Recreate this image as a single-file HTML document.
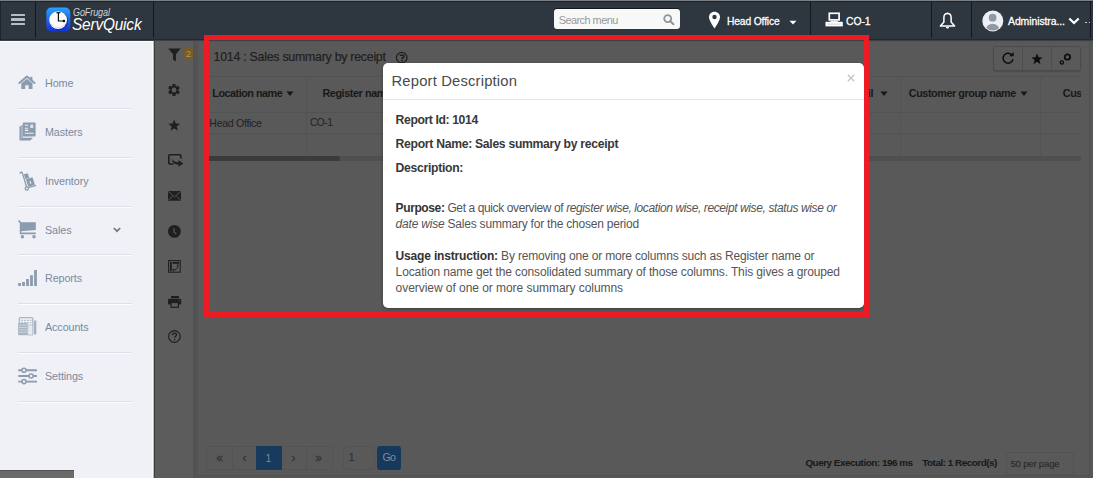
<!DOCTYPE html>
<html><head><meta charset="utf-8">
<style>
*{box-sizing:border-box}
html,body{margin:0;padding:0}
body{width:1093px;height:478px;overflow:hidden;position:relative;background:#575858;font-family:"Liberation Sans",sans-serif}
.a{position:absolute}
.t{position:absolute;white-space:nowrap}
svg{position:absolute;overflow:visible}
.vsep{position:absolute;top:1px;width:1px;height:37px;background:#14191f}
.dv{position:absolute;left:18px;width:114px;height:2px;border-top:1px solid #dde1e7;border-bottom:1px solid #fbfcfd}
</style></head><body>
<div class="a" style="left:0;top:0;width:1093px;height:40px;background:#2e3640"></div>
<div class="a" style="left:0;top:0;width:1093px;height:1px;background:#7c8084"></div>
<div class="a" style="left:0;top:1px;width:1093px;height:1px;background:#1c232c"></div>
<div class="a" style="left:0;top:39px;width:1093px;height:1px;background:#222931"></div>
<div class="a" style="left:0;top:1px;width:1px;height:39px;background:#1c232c"></div>
<div class="a" style="left:10.6px;top:13.9px;width:14.7px;height:2.5px;background:#b6bdc6;border-radius:0.5px"></div>
<div class="a" style="left:10.6px;top:18.3px;width:14.7px;height:2.5px;background:#b6bdc6;border-radius:0.5px"></div>
<div class="a" style="left:10.6px;top:22.7px;width:14.7px;height:2.5px;background:#b6bdc6;border-radius:0.5px"></div>
<div class="vsep" style="left:35px"></div>
<svg style="left:46px;top:7px" width="25" height="25" viewBox="0 0 25 25">
<defs><linearGradient id="lg" x1="0" y1="0" x2="0" y2="1"><stop offset="0" stop-color="#27a3ff"/><stop offset="1" stop-color="#1431d6"/></linearGradient></defs>
<rect x="0.3" y="0.5" width="24" height="24" rx="5" fill="url(#lg)"/>
<circle cx="12.9" cy="13.9" r="9.3" fill="#0b2488" opacity="0.6"/>
<circle cx="12.1" cy="13.1" r="8.9" fill="#fbfbfb"/>
<path d="M5.5 17.5a8.2 8.2 0 0 0 13.8-1.2" stroke="#dcdcdc" stroke-width="1" fill="none"/>
<path d="M12.4 6v8h6.2" stroke="#111" stroke-width="1.2" fill="none"/>
<path d="M10.4 5.7h4" stroke="#222" stroke-width="1.3"/>
<circle cx="17.9" cy="14" r="1.3" fill="#111"/>
</svg>
<div class="t" style="left:73.30px;top:7.58px;font-size:10.3px;line-height:10.3px;color:#d0d3d7;letter-spacing:-0.1px;font-weight:normal;font-style:italic;transform:scaleX(0.875);transform-origin:0 0;">GoFrugal</div>
<div class="t" style="left:72.30px;top:16.47px;font-size:17.4px;line-height:17.4px;color:#ffffff;letter-spacing:-0.2px;font-weight:normal;font-style:italic;transform:scaleX(0.885);transform-origin:0 0;">ServQuick</div>
<div class="vsep" style="left:153px"></div>
<div class="a" style="left:554px;top:9px;width:126px;height:20px;background:#f8f8f8;border-radius:3px;box-shadow:0 -1px 0 #15191e"></div>
<div class="t" style="left:558.70px;top:15.37px;font-size:10.9px;line-height:10.9px;color:#999;letter-spacing:-0.52px;font-weight:normal;font-style:normal;">Search menu</div>
<svg style="left:663px;top:14px" width="12" height="11" viewBox="0 0 12 11">
<circle cx="4.7" cy="4.6" r="3.5" stroke="#8f959c" stroke-width="1.8" fill="none"/>
<path d="M7.3 7.2l3.2 3" stroke="#8f959c" stroke-width="2" stroke-linecap="round"/></svg>
<svg style="left:708px;top:11px" width="13" height="18" viewBox="0 0 13 18">
<path d="M6.5 0.8C3.3 0.8 1 3.2 1 6.2c0 3.6 5.5 11.2 5.5 11.2S12 9.8 12 6.2C12 3.2 9.7 0.8 6.5 0.8z" fill="#fff"/>
<circle cx="6.5" cy="6" r="2.2" fill="#2e3640"/></svg>
<div class="t" style="left:726.70px;top:15.53px;font-size:11.3px;line-height:11.3px;color:#fff;letter-spacing:-0.15px;font-weight:normal;font-style:normal;-webkit-text-stroke:0.3px #fff;transform:scaleX(0.91);transform-origin:0 0;">Head Office</div>
<svg style="left:789px;top:20px" width="8" height="5" viewBox="0 0 8 5"><path d="M0.5 0.8h7L4 4.6z" fill="#fff"/></svg>
<div class="vsep" style="left:810px"></div>
<svg style="left:825px;top:12px" width="18" height="15" viewBox="0 0 18 15">
<rect x="4.3" y="1.3" width="9.8" height="6.6" stroke="#fff" stroke-width="1.7" fill="none"/>
<rect x="5.5" y="8.6" width="7.4" height="1.4" fill="#e8e8e8"/>
<rect x="0.5" y="9.8" width="17.3" height="4.6" fill="#fff"/>
<path d="M2.3 12.1h13.6" stroke="#c9c9cc" stroke-width="0.8"/>
</svg>
<div class="t" style="left:846.00px;top:15.73px;font-size:11.3px;line-height:11.3px;color:#fff;letter-spacing:-0.1px;font-weight:normal;font-style:normal;-webkit-text-stroke:0.3px #fff;transform:scaleX(0.92);transform-origin:0 0;">CO-1</div>
<div class="vsep" style="left:931px"></div>
<svg style="left:939px;top:12px" width="17" height="18" viewBox="0 0 17 18">
<path d="M8.5 1.6C6.2 1.6 4.9 3.4 4.9 5.6v4.3L1.4 13.9h14.2l-3.5-4v-4.3c0-2.2-1.3-4-3.6-4z" stroke="#fff" stroke-width="1.5" fill="none" stroke-linejoin="round"/>
<path d="M6.9 15a1.6 1.6 0 0 0 3.2 0z" fill="#fff"/>
<circle cx="8.5" cy="1.2" r="0.8" fill="#fff"/>
</svg>
<div class="vsep" style="left:971px"></div>
<div class="vsep" style="left:1090px"></div>
<svg style="left:981.5px;top:9.5px" width="22" height="22" viewBox="0 0 22 22">
<defs><clipPath id="cc"><circle cx="10.8" cy="10.9" r="9.6"/></clipPath></defs>
<circle cx="10.8" cy="10.9" r="10.5" fill="#eeeff3"/>
<g clip-path="url(#cc)" fill="#8e9aa6"><circle cx="10.6" cy="7.7" r="3.9"/><ellipse cx="10.6" cy="19.3" rx="6.6" ry="5.5"/></g></svg>
<div class="t" style="left:1007.60px;top:15.83px;font-size:11.3px;line-height:11.3px;color:#fff;letter-spacing:-0.1px;font-weight:normal;font-style:normal;-webkit-text-stroke:0.3px #fff;transform:scaleX(0.925);transform-origin:0 0;">Administra...</div>
<svg style="left:1068px;top:17px" width="12" height="8" viewBox="0 0 12 8"><path d="M1.3 1.5l4.7 4.5 4.7-4.5" stroke="#fff" stroke-width="2.3" fill="none"/></svg>
<div class="a" style="left:1085px;top:21.5px;width:1.5px;height:1.5px;background:#ccc"></div>
<div class="a" style="left:1088.5px;top:21.5px;width:1.5px;height:1.5px;background:#ccc"></div>
<div class="a" style="left:0;top:40px;width:1093px;height:1px;background:#3c4148"></div>
<div class="a" style="left:0;top:41px;width:154px;height:437px;background:#eff1f6"></div>
<div class="a" style="left:0;top:41px;width:153px;height:1px;background:#fdfdfe"></div>
<div class="a" style="left:152px;top:41px;width:1px;height:437px;background:#fbfcfe"></div>
<div class="a" style="left:153px;top:41px;width:1px;height:437px;background:#b4bac1"></div>
<div class="t" style="left:45.30px;top:78.11px;font-size:11.8px;line-height:11.8px;color:#7b899e;letter-spacing:-0.1px;font-weight:normal;font-style:normal;transform:scaleX(0.912);transform-origin:0 0;">Home</div>
<svg style="left:18px;top:75px" width="18" height="15" viewBox="0 0 18 15"><path d="M1.3 8L8.9 1.6 16.5 8" stroke="#8c9bae" stroke-width="2" fill="none" stroke-linecap="round" stroke-linejoin="round"/><path d="M3.3 8.3L8.9 3.7l5.6 4.6V14h-3.9v-3.8H7.2V14H3.3z" fill="#8c9bae"/><rect x="12.2" y="1.8" width="2.2" height="4" fill="#8c9bae"/></svg>
<div class="dv" style="top:108.00px"></div>
<div class="t" style="left:45.30px;top:126.91px;font-size:11.8px;line-height:11.8px;color:#7b899e;letter-spacing:-0.1px;font-weight:normal;font-style:normal;transform:scaleX(0.912);transform-origin:0 0;">Masters</div>
<svg style="left:17.5px;top:122px" width="19" height="19" viewBox="0 0 19 19"><path d="M2.3 4.2v13.5h10.5" stroke="#8c9bae" stroke-width="1.6" fill="none"/><path d="M4 3v13.5h10.3" stroke="#8c9bae" stroke-width="1.3" fill="none"/><rect x="4.8" y="0.6" width="12.8" height="14" rx="1" fill="#8c9bae"/><path d="M6.8 3.3h3.4M6.8 6.3h3.4M6.8 8.4h3.4M6.8 11.2h8.7" stroke="#f0f2f6" stroke-width="1.1"/><rect x="12.2" y="2.6" width="3" height="3.4" fill="#dfe3ea"/></svg>
<div class="dv" style="top:156.80px"></div>
<div class="t" style="left:45.30px;top:175.71px;font-size:11.8px;line-height:11.8px;color:#7b899e;letter-spacing:-0.1px;font-weight:normal;font-style:normal;transform:scaleX(0.912);transform-origin:0 0;">Inventory</div>
<svg style="left:18.5px;top:171px" width="18" height="20" viewBox="0 0 18 20"><path d="M0.8 2.6c0.5-1.8 2.4-1.8 2.8 0l4 13.4" stroke="#8c9bae" stroke-width="1.3" fill="none"/><circle cx="7.8" cy="17.5" r="1.6" stroke="#8c9bae" stroke-width="1.3" fill="none"/><path d="M9.3 16.6l7.8-2.2" stroke="#8c9bae" stroke-width="1.3"/><path d="M4.9 3.3l3.8-1.1 1.5 4.6-3.8 1.1z" fill="#8c9bae"/><path d="M6.9 8.3l6.6-2 2.4 7.4-6.6 2z" fill="#8c9bae"/><path d="M11 10.2l0.9 2.6" stroke="#eef0f5" stroke-width="1.1"/></svg>
<div class="dv" style="top:205.60px"></div>
<div class="t" style="left:45.30px;top:224.51px;font-size:11.8px;line-height:11.8px;color:#7b899e;letter-spacing:-0.1px;font-weight:normal;font-style:normal;transform:scaleX(0.912);transform-origin:0 0;">Sales</div>
<svg style="left:18px;top:220px" width="19" height="19" viewBox="0 0 19 19"><path d="M0.6 0.6l2 2.2v10.6h15.2" stroke="#8c9bae" stroke-width="1.6" fill="none"/><path d="M2.6 2.3H17.8v7.8L2.6 11.3z" fill="#8c9bae"/><circle cx="4.4" cy="16.8" r="1.75" fill="#8c9bae"/><circle cx="16" cy="16.8" r="1.75" fill="#8c9bae"/></svg>
<div class="dv" style="top:254.40px"></div>
<div class="t" style="left:45.30px;top:273.31px;font-size:11.8px;line-height:11.8px;color:#7b899e;letter-spacing:-0.1px;font-weight:normal;font-style:normal;transform:scaleX(0.912);transform-origin:0 0;">Reports</div>
<svg style="left:18px;top:269px" width="19" height="18" viewBox="0 0 19 18"><rect x="0.1" y="14" width="2.8" height="3" fill="#8c9bae"/><rect x="4.1" y="13" width="2.8" height="4" fill="#8c9bae"/><rect x="8.1" y="10" width="2.8" height="7" fill="#8c9bae"/><rect x="12.1" y="6.2" width="2.8" height="10.8" fill="#8c9bae"/><rect x="16.1" y="1" width="2.8" height="16" fill="#8c9bae"/></svg>
<div class="dv" style="top:303.20px"></div>
<div class="t" style="left:45.30px;top:322.11px;font-size:11.8px;line-height:11.8px;color:#7b899e;letter-spacing:-0.1px;font-weight:normal;font-style:normal;transform:scaleX(0.912);transform-origin:0 0;">Accounts</div>
<svg style="left:18px;top:317px" width="19" height="19" viewBox="0 0 19 19"><rect x="1.3" y="0.6" width="13.5" height="16" rx="1" fill="none" stroke="#a8b4c3" stroke-width="1.2"/><path d="M3 3.4h10.5M3 5.7h10.5" stroke="#b9c2cf" stroke-width="1.3" stroke-dasharray="2 1"/><rect x="0.2" y="6" width="9.5" height="12.2" fill="#a9b4c2"/><path d="M1 8h7.8M1 10.4h7.8M1 12.8h7.8M1 15.2h7.8" stroke="#d2d8e1" stroke-width="0.9"/><rect x="9.8" y="8" width="5" height="10" fill="#e6e9ef" stroke="#b3bdca" stroke-width="0.8"/><path d="M17.2 3.5v14" stroke="#a3afbe" stroke-width="2.2"/></svg>
<div class="dv" style="top:352.00px"></div>
<div class="t" style="left:45.30px;top:370.91px;font-size:11.8px;line-height:11.8px;color:#7b899e;letter-spacing:-0.1px;font-weight:normal;font-style:normal;transform:scaleX(0.912);transform-origin:0 0;">Settings</div>
<svg style="left:18px;top:366px" width="19" height="19" viewBox="0 0 19 19"><path d="M0.3 4.2h18.6M0.3 10h18.6M0.3 15.6h18.6" stroke="#8c9bae" stroke-width="1.9"/><circle cx="6" cy="4.2" r="2.05" fill="#eff1f6" stroke="#8c9bae" stroke-width="1.5"/><circle cx="13.1" cy="10" r="2.05" fill="#eff1f6" stroke="#8c9bae" stroke-width="1.5"/><circle cx="6" cy="15.6" r="2.05" fill="#eff1f6" stroke="#8c9bae" stroke-width="1.5"/></svg>
<div class="dv" style="top:400.80px"></div>
<svg style="left:113px;top:227px" width="8" height="6" viewBox="0 0 8 6"><path d="M0.8 1l3.2 3.2L7.2 1" stroke="#777" stroke-width="1.7" fill="none"/></svg>
<div class="a" style="left:0;top:470px;width:74px;height:8px;background:#6a6a6a;border-top:1px solid #545454"></div>
<div class="a" style="left:154px;top:41px;width:1px;height:437px;background:#3e3f3f"></div>
<div class="a" style="left:155px;top:41px;width:38px;height:437px;background:#5c5c5c"></div>
<div class="a" style="left:193px;top:41px;width:900px;height:437px;background:#555656"></div>
<div class="a" style="left:198px;top:41px;width:891.5px;height:434.5px;background:#595959;border-top:1px solid #545555;border-right:1px solid #505151;border-bottom:1px solid #505151;border-radius:0 0 3px 0"></div>
<svg style="left:168px;top:48px" width="13" height="14" viewBox="0 0 13 14"><path d="M0.2 0.6h12.4L7.9 6.2v7.2L5 11.6V6.2z" fill="#1d1f21"/></svg>
<div class="a" style="left:184px;top:47.7px;width:9.3px;height:11.3px;background:#7b5b22;border-radius:2px"></div>
<div class="t" style="left:186.00px;top:49.26px;font-size:9.5px;line-height:9.5px;color:#a99470;letter-spacing:0px;font-weight:normal;font-style:normal;">2</div>
<svg style="left:168.3px;top:84px" width="12" height="12" viewBox="0 0 12 12"><path d="M4.25 2.07 L4.63 0.06 L7.37 0.06 L7.75 2.07 L8.53 2.52 L10.46 1.84 L11.83 4.22 L10.28 5.55 L10.28 6.45 L11.83 7.78 L10.46 10.16 L8.53 9.48 L7.75 9.93 L7.37 11.94 L4.63 11.94 L4.25 9.93 L3.47 9.48 L1.54 10.16 L0.17 7.78 L1.72 6.45 L1.72 5.55 L0.17 4.22 L1.54 1.84 L3.47 2.52Z M6 3.6a2.4 2.4 0 1 0 0.01 0z" fill="#1d1f21" fill-rule="evenodd"/></svg>
<svg style="left:168px;top:119px" width="13" height="12" viewBox="0 0 13 12"><path d="M6.20 0.30 L7.73 4.50 L12.19 4.65 L8.67 7.40 L9.90 11.70 L6.20 9.20 L2.50 11.70 L3.73 7.40 L0.21 4.65 L4.67 4.50Z" fill="#1d1f21"/></svg>
<svg style="left:168px;top:154px" width="16" height="13" viewBox="0 0 16 13"><path d="M5.5 10H2a1.2 1.2 0 0 1-1.2-1.2V2A1.2 1.2 0 0 1 2 0.8h9.6A1.2 1.2 0 0 1 12.8 2v2.5" stroke="#1d1f21" stroke-width="1.6" fill="none"/><path d="M3.2 4.2c1.5 2.8 4 4 7.2 4V6.1l5 3.5-5 3.2v-2.2c-3.5 0-6-1.8-7.2-6.4z" fill="#1d1f21"/></svg>
<svg style="left:168px;top:191px" width="13" height="10" viewBox="0 0 13 10"><rect x="0" y="0" width="13" height="9.8" rx="0.6" fill="#1d1f21"/><path d="M0.3 0.5L6.5 5.8 12.7 0.5M0.3 9.4L4.6 5.1M12.7 9.4L8.4 5.1" stroke="#5c5c5c" stroke-width="0.9" fill="none"/></svg>
<svg style="left:168px;top:224.5px" width="13" height="13" viewBox="0 0 13 13"><circle cx="6.4" cy="6.4" r="6.4" fill="#1d1f21"/><path d="M6 3.2v3.6l2.3 2.3" stroke="#5c5c5c" stroke-width="1.2" fill="none"/></svg>
<svg style="left:168px;top:260px" width="13" height="13" viewBox="0 0 13 13"><rect x="0.6" y="0.6" width="11.6" height="11.6" stroke="#1d1f21" stroke-width="1.1" fill="none"/><rect x="2" y="2" width="1.8" height="9" fill="#1d1f21"/><rect x="4.6" y="2" width="6.4" height="1.8" fill="#1d1f21"/><path d="M5 10c2.5 0 4.8-1 4.8-4.2" stroke="#1d1f21" stroke-width="1" fill="none"/><path d="M8.4 5.4h2.8L9.8 3.9z" fill="#1d1f21"/><path d="M5.2 8.8v2.4" stroke="#1d1f21" stroke-width="1"/></svg>
<svg style="left:168px;top:295.5px" width="14" height="12" viewBox="0 0 14 12"><rect x="3" y="0" width="8" height="2.2" fill="#1d1f21"/><rect x="0" y="2.8" width="13.2" height="5.6" rx="1" fill="#1d1f21"/><rect x="3" y="6.5" width="7.4" height="4.8" stroke="#1d1f21" stroke-width="1.2" fill="#5c5c5c"/><circle cx="11.4" cy="4.2" r="0.5" fill="#666"/></svg>
<svg style="left:168px;top:330px" width="13" height="13" viewBox="0 0 13 13"><circle cx="6.4" cy="6.5" r="5.8" stroke="#1d1f21" stroke-width="1.2" fill="none"/><path d="M4.5 5.2c0-1.2 0.9-2 2-2s2 0.8 2 1.8c0 1.3-1.8 1.4-1.8 2.8" stroke="#1d1f21" stroke-width="1.3" fill="none"/><circle cx="6.6" cy="9.6" r="0.8" fill="#1d1f21"/></svg>
<div class="a" style="left:193px;top:41px;width:5px;height:437px;background:#525353"></div>
<div class="t" style="left:213.60px;top:51.20px;font-size:12.4px;line-height:12.4px;color:#1f1f1f;letter-spacing:-0.27px;font-weight:normal;font-style:normal;-webkit-text-stroke:0.2px #1f1f1f">1014 : Sales summary by receipt</div>
<svg style="left:394.5px;top:51.5px" width="14" height="12" viewBox="0 0 14 12"><circle cx="6.7" cy="5.6" r="5.3" stroke="#1d1f21" stroke-width="1.3" fill="none"/><path d="M4.6 3.2h4.2v1.6L7.2 6.4v0.8" stroke="#1d1f21" stroke-width="1.6" fill="none"/><rect x="6.3" y="7.9" width="1.7" height="1.5" fill="#1d1f21"/></svg>
<div class="a" style="left:993px;top:46px;width:87.5px;height:24.5px;border:1px solid #4a4b4b;border-radius:3px;background:#5a5a5a;box-shadow:0 1px 1px rgba(0,0,0,0.15)"></div>
<div class="a" style="left:1022px;top:47px;width:1px;height:23px;background:#4d4e4e"></div>
<div class="a" style="left:1051px;top:47px;width:1px;height:23px;background:#4d4e4e"></div>
<svg style="left:1000.5px;top:51.2px" width="14" height="14" viewBox="0 0 14 14"><path d="M11.2 4.3A5 5 0 1 0 12 8.2" stroke="#0e0e0e" stroke-width="1.5" fill="none"/><path d="M8.3 5.2h4.3V0.9z" fill="#0e0e0e"/></svg>
<svg style="left:1030.5px;top:52.5px" width="12" height="12" viewBox="0 0 12 12"><path d="M6.00 0.30 L7.47 4.28 L11.71 4.45 L8.38 7.07 L9.53 11.15 L6.00 8.80 L2.47 11.15 L3.62 7.07 L0.29 4.45 L4.53 4.28Z" fill="#0e0e0e"/></svg>
<svg style="left:1058px;top:51.5px" width="14" height="13" viewBox="0 0 14 13"><circle cx="9.4" cy="5" r="2.7" stroke="#0e0e0e" stroke-width="1.8" fill="none"/><circle cx="3.8" cy="10.4" r="1.6" stroke="#0e0e0e" stroke-width="1.3" fill="none"/></svg>
<div class="a" style="left:208px;top:76px;width:872.5px;height:1px;background:#525353"></div>
<div class="a" style="left:208px;top:112px;width:872.5px;height:1px;background:#525353"></div>
<div class="a" style="left:208px;top:133px;width:872.5px;height:1px;background:#525353"></div>
<div class="a" style="left:306px;top:77px;width:1px;height:84px;background:#525353"></div>
<div class="a" style="left:900px;top:77px;width:1px;height:84px;background:#525353"></div>
<div class="a" style="left:1040px;top:77px;width:1px;height:84px;background:#525353"></div>
<div class="t" style="left:212.30px;top:87.66px;font-size:10.8px;line-height:10.8px;color:#181818;letter-spacing:-0.48px;font-weight:bold;font-style:normal;">Location name</div>
<svg style="left:286px;top:90.5px" width="8" height="6" viewBox="0 0 8 6"><path d="M0.4 0.6h7.2L4 5z" fill="#181818"/></svg>
<div class="t" style="left:322.40px;top:87.66px;font-size:10.8px;line-height:10.8px;color:#181818;letter-spacing:-0.4px;font-weight:bold;font-style:normal;">Register name</div>
<svg style="left:880px;top:90.5px" width="8" height="6" viewBox="0 0 8 6"><path d="M0.4 0.6h7.2L4 5z" fill="#181818"/></svg>
<div class="t" style="left:862.30px;top:87.66px;font-size:10.8px;line-height:10.8px;color:#181818;letter-spacing:-0.43px;font-weight:bold;font-style:normal;">ail</div>
<div class="t" style="left:908.80px;top:87.66px;font-size:10.8px;line-height:10.8px;color:#181818;letter-spacing:-0.43px;font-weight:bold;font-style:normal;">Customer group name</div>
<svg style="left:1020px;top:90.5px" width="8" height="6" viewBox="0 0 8 6"><path d="M0.4 0.6h7.2L4 5z" fill="#181818"/></svg>
<div class="a" style="left:1062px;top:80px;width:19px;height:24px;overflow:hidden"><div class="t" style="left:0.80px;top:7.66px;font-size:10.8px;line-height:10.8px;color:#181818;letter-spacing:-0.43px;font-weight:bold;font-style:normal;">Customer</div>
</div>
<div class="t" style="left:209.30px;top:117.63px;font-size:10.6px;line-height:10.6px;color:#222;letter-spacing:-0.31px;font-weight:normal;font-style:normal;">Head Office</div>
<div class="t" style="left:310.00px;top:117.97px;font-size:10.2px;line-height:10.2px;color:#222;letter-spacing:-0.5px;font-weight:normal;font-style:normal;">CO-1</div>
<div class="a" style="left:208px;top:156px;width:872.5px;height:5px;background:#4e4f4f"></div>
<div class="a" style="left:208px;top:156px;width:131.5px;height:5px;background:#3a3b3b;border-radius:0 2.5px 2.5px 0"></div>
<div class="a" style="left:206px;top:446px;width:127px;height:24px;border:1px solid #525353;border-radius:3px"></div>
<div class="a" style="left:232px;top:446px;width:1px;height:24px;background:#525353"></div>
<div class="a" style="left:306px;top:446px;width:1px;height:24px;background:#525353"></div>
<div class="a" style="left:256px;top:446px;width:25.5px;height:24px;background:#173a5d"></div>
<div class="t" style="left:216.20px;top:452.14px;font-size:12px;line-height:12px;color:#333;letter-spacing:0px;font-weight:normal;font-style:normal;-webkit-text-stroke:0.25px #333">&laquo;</div>
<div class="t" style="left:242.40px;top:452.14px;font-size:12px;line-height:12px;color:#333;letter-spacing:0px;font-weight:normal;font-style:normal;-webkit-text-stroke:0.25px #333">&lsaquo;</div>
<div class="t" style="left:265.60px;top:454.10px;font-size:10.4px;line-height:10.4px;color:#7a8896;letter-spacing:0px;font-weight:normal;font-style:normal;">1</div>
<div class="t" style="left:291.60px;top:452.14px;font-size:12px;line-height:12px;color:#333;letter-spacing:0px;font-weight:normal;font-style:normal;-webkit-text-stroke:0.25px #333">&rsaquo;</div>
<div class="t" style="left:315.30px;top:452.14px;font-size:12px;line-height:12px;color:#333;letter-spacing:0px;font-weight:normal;font-style:normal;-webkit-text-stroke:0.25px #333">&raquo;</div>
<div class="a" style="left:342.5px;top:446px;width:32px;height:24px;border:1px solid #525353;border-radius:4px"></div>
<div class="t" style="left:348.80px;top:453.10px;font-size:10.4px;line-height:10.4px;color:#2a2a2a;letter-spacing:0px;font-weight:normal;font-style:normal;">1</div>
<div class="a" style="left:377px;top:446px;width:24px;height:24px;background:#173a5c;border-radius:3px"></div>
<div class="t" style="left:382.40px;top:452.04px;font-size:10.7px;line-height:10.7px;color:#7b8d9e;letter-spacing:-0.6px;font-weight:normal;font-style:normal;">Go</div>
<div class="t" style="left:805.40px;top:458.22px;font-size:9.9px;line-height:9.9px;color:#181818;letter-spacing:-0.47px;font-weight:bold;font-style:normal;">Query Execution: 196 ms</div>
<div class="t" style="left:922.20px;top:458.22px;font-size:9.9px;line-height:9.9px;color:#181818;letter-spacing:-0.47px;font-weight:bold;font-style:normal;">Total: 1 Record(s)</div>
<div class="a" style="left:1006px;top:451.5px;width:68px;height:23px;border:1px solid #525353;border-left:1px solid #525353"></div>
<div class="t" style="left:1010.40px;top:458.67px;font-size:9.6px;line-height:9.6px;color:#242424;letter-spacing:-0.2px;font-weight:normal;font-style:normal;">50 per page</div>
<div class="a" style="left:383px;top:63px;width:480.5px;height:245px;background:#fff;border-radius:5px;box-shadow:0 1px 3px rgba(0,0,0,0.35)"></div>
<div class="t" style="left:391.50px;top:73.57px;font-size:14.8px;line-height:14.8px;color:#4a4a4a;letter-spacing:0.17px;font-weight:normal;font-style:normal;">Report Description</div>
<svg style="left:846.5px;top:74px" width="8" height="8" viewBox="0 0 8 8"><path d="M0.8 0.8l6.4 6.4M7.2 0.8L0.8 7.2" stroke="#c4c4c4" stroke-width="1.3"/></svg>
<div class="a" style="left:383px;top:98.5px;width:480.5px;height:1px;background:#e6e6e6"></div>
<div class="t" style="left:395.60px;top:113.97px;font-size:12.2px;line-height:12.2px;color:#383838;letter-spacing:-0.39px;font-weight:bold;font-style:normal;">Report Id: 1014</div>
<div class="t" style="left:395.60px;top:137.97px;font-size:12.2px;line-height:12.2px;color:#383838;letter-spacing:-0.3px;font-weight:bold;font-style:normal;">Report Name: Sales summary by receipt</div>
<div class="t" style="left:395.60px;top:161.87px;font-size:12.2px;line-height:12.2px;color:#383838;letter-spacing:-0.3px;font-weight:bold;font-style:normal;">Description:</div>
<div class="t" style="left:395.60px;top:201.94px;font-size:12px;line-height:12px;color:#555;letter-spacing:-0.39px;font-weight:normal;font-style:normal;"><b style="color:#333">Purpose:</b> Get a quick overview of <i>register wise, location wise, receipt wise, status wise or</i></div>
<div class="t" style="left:395.60px;top:217.74px;font-size:12px;line-height:12px;color:#555;letter-spacing:-0.21px;font-weight:normal;font-style:normal;"><i>date wise</i> Sales summary for the chosen period</div>
<div class="t" style="left:395.60px;top:250.24px;font-size:12px;line-height:12px;color:#555;letter-spacing:-0.17px;font-weight:normal;font-style:normal;"><b style="color:#333">Usage instruction:</b> By removing one or more columns such as Register name or</div>
<div class="t" style="left:395.60px;top:265.64px;font-size:12px;line-height:12px;color:#555;letter-spacing:-0.12px;font-weight:normal;font-style:normal;">Location name get the consolidated summary of those columns. This gives a grouped</div>
<div class="t" style="left:395.60px;top:282.04px;font-size:12px;line-height:12px;color:#555;letter-spacing:-0.05px;font-weight:normal;font-style:normal;">overview of one or more summary columns</div>
<div class="a" style="left:204px;top:35px;width:665px;height:282px;border:5px solid #ed1c24"></div>
</body></html>
